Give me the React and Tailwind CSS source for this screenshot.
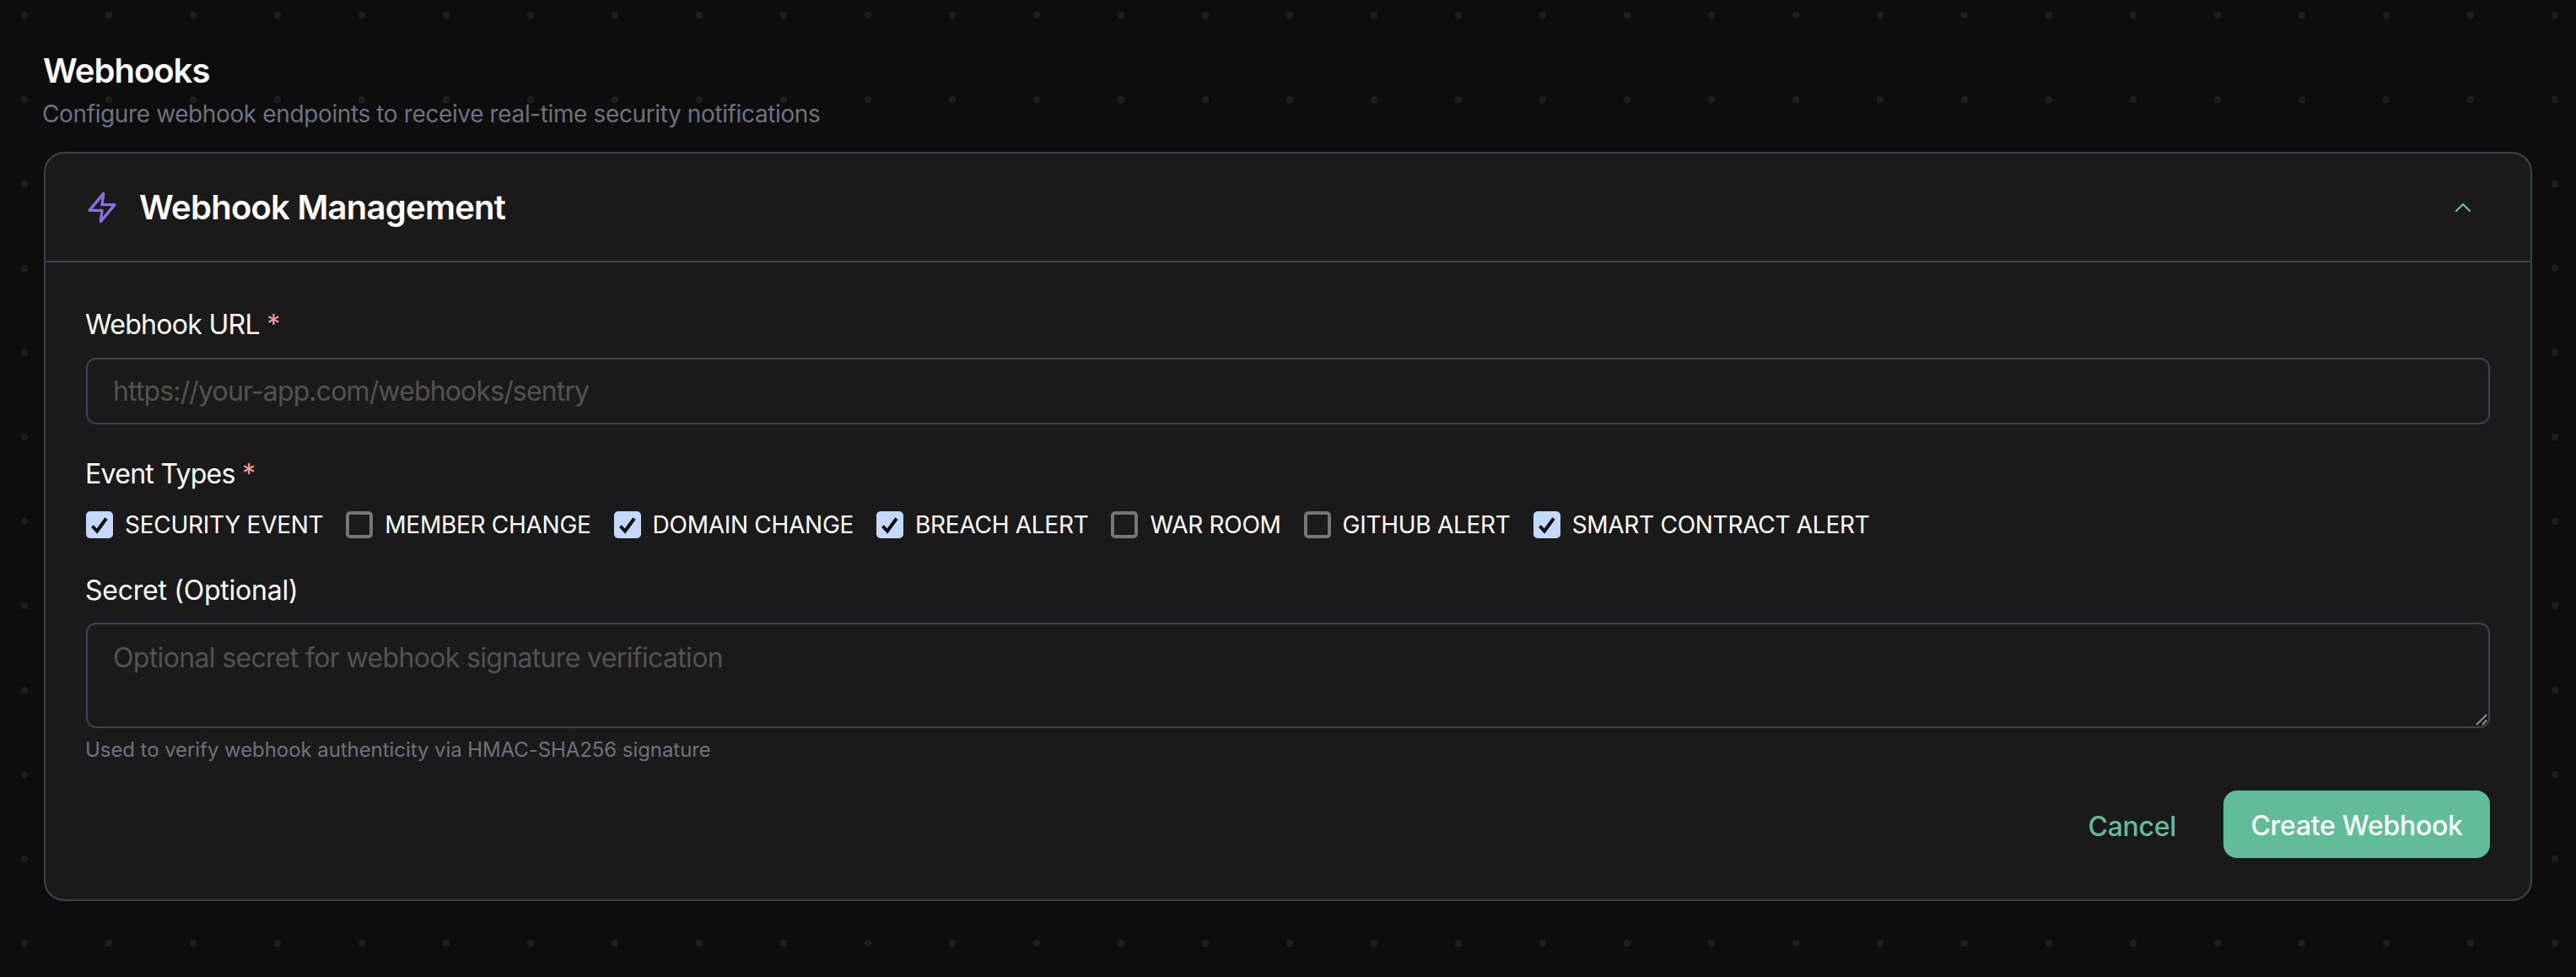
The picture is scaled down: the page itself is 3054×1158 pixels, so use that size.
import React from 'react';
import { ChevronUp } from 'lucide-react';
import { FiZap } from 'react-icons/fi';

const eventTypes = [
  { label: 'SECURITY EVENT', checked: true },
  { label: 'MEMBER CHANGE', checked: false },
  { label: 'DOMAIN CHANGE', checked: true },
  { label: 'BREACH ALERT', checked: true },
  { label: 'WAR ROOM', checked: false },
  { label: 'GITHUB ALERT', checked: false },
  { label: 'SMART CONTRACT ALERT', checked: true },
];

const CheckBox = ({ checked }) =>
  checked ? (
    <span className="flex h-8 w-8 items-center justify-center rounded-[5px] bg-[#c3d9fd]">
      <svg viewBox="0 0 32 32" className="h-8 w-8" fill="none" stroke="#111" strokeWidth="4">
        <path d="M7.5 17.5 L13 23.5 L24 8.5" />
      </svg>
    </span>
  ) : (
    <span className="block h-8 w-8 rounded-[5px] border-4 border-[#767676]" />
  );

const App = () => {
  return (
    <div
      className="h-[1158px] overflow-hidden bg-[#0d0d0d] bg-[radial-gradient(circle,#1e1e1e_4px,transparent_4.5px)] bg-[size:100px_100px] bg-[position:-21px_-32px] px-[52px] pt-[60px] text-white"
      style={{ fontFamily: 'Inter, sans-serif' }}
    >
      <h1 className="-ml-px text-[40px] leading-[48px] font-semibold tracking-[-1px]">Webhooks</h1>
      <p className="mt-[7px] -ml-0.5 text-[28px] leading-[40px] tracking-[-0.38px] text-[#6b7280]">
        Configure webhook endpoints to receive real-time security notifications
      </p>

      <div className="mt-[25px] h-[888px] rounded-3xl border-2 border-[#3a4354] bg-[#1a1a1a]">
        {/* Header */}
        <div className="flex h-[129px] items-center justify-between border-b-2 border-[#3a4354] pr-[64px] pl-[47px]">
          <div className="flex items-center gap-6">
            <FiZap size={40} className="text-[#8b6fe0]" />
            <h2 className="text-[40px] leading-[48px] font-semibold tracking-[-0.75px]">Webhook Management</h2>
          </div>
          <ChevronUp size={32} strokeWidth={1.75} className="text-[#61bd98]" />
        </div>

        {/* Form */}
        <div className="px-[48px] pt-[54px]">
          <label className="-ml-px block text-[32px] leading-[40px] tracking-[-0.7px]">
            Webhook URL <span className="text-[#f29b9b]">*</span>
          </label>
          <input
            type="text"
            placeholder="https://your-app.com/webhooks/sentry"
            className="mt-[19px] block h-[79px] w-full rounded-xl border-2 border-[#3a4354] bg-transparent px-[30px] text-[32px] tracking-[-0.85px] outline-none placeholder:text-[#525252]"
          />

          <label className="mt-[39px] -ml-px block text-[32px] leading-[40px] tracking-[-0.7px]">
            Event Types <span className="text-[#f29b9b]">*</span>
          </label>
          <div className="mt-[20px] flex items-center gap-[27px]">
            {eventTypes.map(item => (
              <div key={item.label} className="flex items-center gap-[14px]">
                <CheckBox checked={item.checked} />
                <span className="text-[28px] leading-[40px] tracking-[-0.28px]">{item.label}</span>
              </div>
            ))}
          </div>

          <label className="mt-[38px] -ml-px block text-[32px] leading-[40px] tracking-[-0.25px]">Secret (Optional)</label>
          <div className="relative mt-[18px]">
            <textarea
              placeholder="Optional secret for webhook signature verification"
              className="block h-[125px] w-full resize-none rounded-xl border-2 border-[#3a4354] bg-transparent px-[30px] py-[20px] text-[32px] leading-[40px] tracking-[-0.66px] outline-none placeholder:text-[#525252]"
            />
            {/* resize handle */}
            <svg className="absolute right-[3px] bottom-[3px] h-[14px] w-[14px]" viewBox="0 0 14 14" fill="none" stroke="#8f8f8f" strokeWidth="2">
              <path d="M1 13 L13 1" />
              <path d="M8 13 L13 7.5" />
            </svg>
          </div>
          <p className="mt-[10px] -ml-px text-[24px] leading-[32px] tracking-[-0.07px] text-[#6b7280]">
            Used to verify webhook authenticity via HMAC-SHA256 signature
          </p>

          <div className="mt-[32px] flex items-center justify-end gap-[56px]">
            <button className="pt-[6px] text-[32px] font-medium tracking-[-0.3px] text-[#61bd98]">Cancel</button>
            <button className="h-[80px] w-[316px] rounded-2xl bg-[#61bd98] pt-[4px] text-[32px] font-medium tracking-[-0.3px] text-white">
              Create Webhook
            </button>
          </div>
        </div>
      </div>
    </div>
  );
};

export default App;
